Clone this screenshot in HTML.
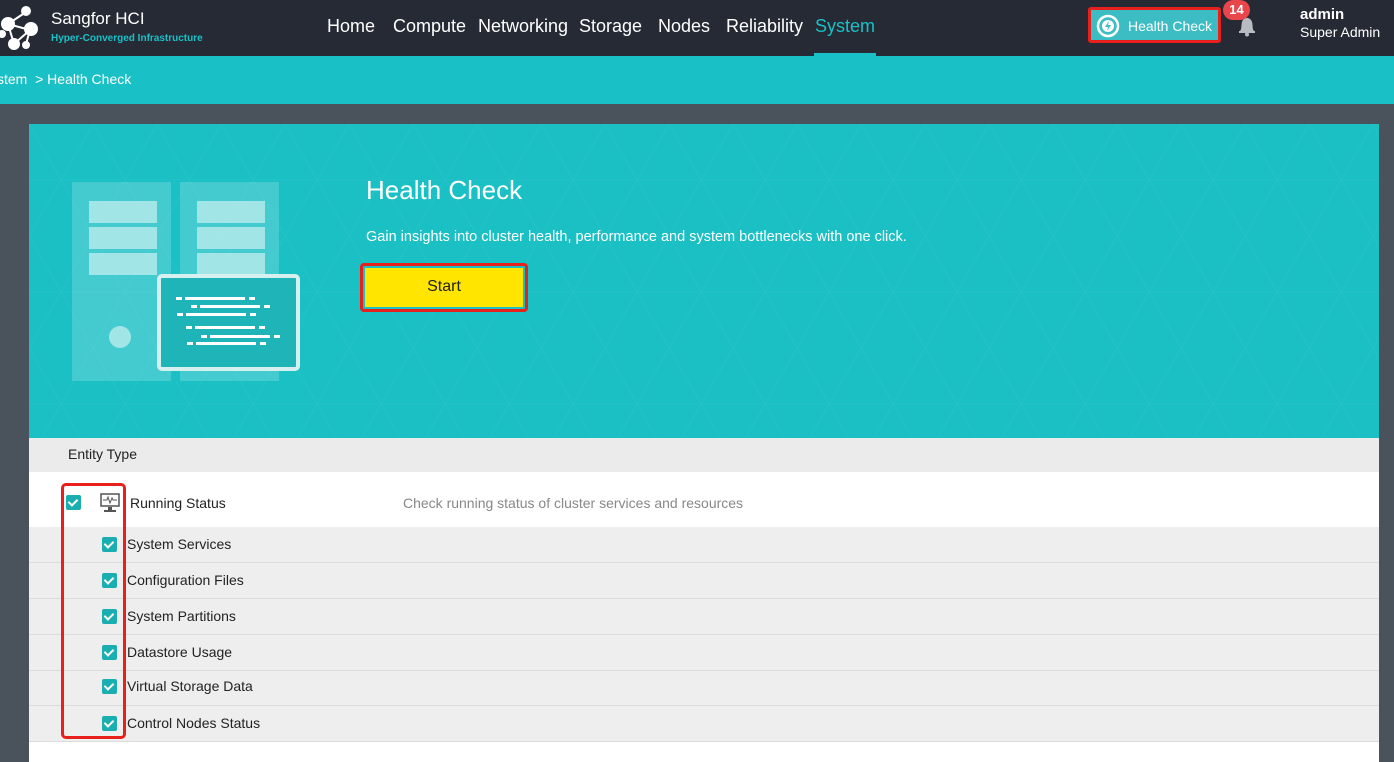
<!DOCTYPE html>
<html><head><meta charset="utf-8"><style>
*{margin:0;padding:0;box-sizing:border-box}
body{width:1394px;height:762px;overflow:hidden;background:#4a525c;font-family:"Liberation Sans",sans-serif;position:relative}
.top{position:absolute;left:0;top:0;width:1394px;height:56px;background:#252a35}
.crumb{position:absolute;left:0;top:56px;width:1394px;height:48px;background:#19c1c6;color:#fff;font-size:14px;line-height:46px}
.nav span{position:absolute;top:16px;font-size:18px;color:#fff}
.panel{position:absolute;left:29px;top:124px;width:1350px;height:638px;background:#fff}
.banner{position:absolute;left:0;top:0;width:1350px;height:314px;background:#1bc0c5}
.row{position:absolute;left:0;width:1350px;font-size:14px;color:#222}
.sub{height:36px;background:#eeeeee;border-bottom:1px solid #dcdcdc}
.cb{position:absolute;width:15px;height:15px;background:#1aaeb0;border-radius:2px}
.cb:after{content:"";position:absolute;left:4px;top:2px;width:4px;height:7px;border:solid #fff;border-width:0 2px 2px 0;transform:rotate(45deg)}
.sub .cb{left:73px;top:10px}
.sub span{position:absolute;left:98px;top:9px}
</style></head><body>
<div class="top">
 <svg style="position:absolute;left:0;top:4px" width="42" height="48"><g fill="#fff" stroke="#fff" stroke-width="2"><line x1="8" y1="20" x2="26" y2="8"/><line x1="8" y1="20" x2="30" y2="26"/><line x1="8" y1="20" x2="14" y2="40"/><line x1="30" y1="26" x2="14" y2="40"/><line x1="30" y1="26" x2="26" y2="40"/><circle cx="26" cy="7" r="4"/><circle cx="8" cy="20" r="6"/><circle cx="31" cy="25" r="6"/><circle cx="14" cy="40" r="5"/><circle cx="26" cy="41" r="3"/><circle cx="2" cy="30" r="3"/></g></svg>
 <div style="position:absolute;left:51px;top:9px;color:#fff;font-size:17px">Sangfor HCI</div>
 <div style="position:absolute;left:51px;top:33px;color:#19c1c6;font-size:10px;font-weight:bold">Hyper-Converged Infrastructure</div>
 <div class="nav"><span style="left:327px">Home</span><span style="left:393px">Compute</span><span style="left:478px">Networking</span><span style="left:579px">Storage</span><span style="left:658px">Nodes</span><span style="left:726px">Reliability</span><span style="left:815px;color:#19c1c6">System</span></div>
 <div style="position:absolute;left:814px;top:53px;width:62px;height:3px;background:#19c1c6"></div>
 <div style="position:absolute;left:1088px;top:7px;width:133px;height:36px;border:3px solid #e8201c;border-radius:3px;background:#3bbdc3">
  <svg style="position:absolute;left:5px;top:4px" width="24" height="24"><circle cx="12" cy="12" r="10" fill="none" stroke="#fff" stroke-width="2.5"/><circle cx="12" cy="12" r="6" fill="#fff"/><path d="M13 7 L9 13 H12 L11 17 L15 11 H12 Z" fill="#3bbdc3"/></svg>
  <span style="position:absolute;left:37px;top:8px;color:#fff;font-size:14px">Health Check</span>
 </div>
 <svg style="position:absolute;left:1237px;top:15px" width="20" height="22"><path d="M3 16 C5 14 4 10 5 7 C6 4 8 3 10 3 C12 3 14 4 15 7 C16 10 15 14 17 16 Z" fill="#b8bcc2"/><rect x="2" y="16" width="16" height="2" fill="#b8bcc2"/><circle cx="10" cy="19.5" r="2" fill="#b8bcc2"/></svg>
 <div style="position:absolute;left:1223px;top:0;width:27px;height:20px;border-radius:10px;background:#e8464a;color:#fff;font-size:13px;font-weight:bold;text-align:center;line-height:20px">14</div>
 <div style="position:absolute;left:1300px;top:6px;color:#fff;font-size:15px;font-weight:bold">admin</div>
 <div style="position:absolute;left:1300px;top:24px;color:#fff;font-size:14px">Super Admin</div>
</div>
<div class="crumb"><span style="margin-left:-3px">stem &nbsp;&gt; Health Check</span></div>
<div class="panel">
 <div class="banner">
  <svg width="1350" height="314" style="position:absolute;left:0;top:0"><defs><pattern id="p" width="64" height="112" patternUnits="userSpaceOnUse"><path d="M0 0 L32 56 L64 0 M0 112 L32 56 L64 112 M0 56 H64" stroke="#fff" stroke-opacity="0.035" fill="none"/></pattern></defs><rect width="1350" height="314" fill="url(#p)"/>
  <g fill="#fff"><rect x="43" y="58" width="99" height="199" fill-opacity="0.18"/><rect x="151" y="58" width="99" height="199" fill-opacity="0.18"/>
  <g fill-opacity="0.5"><rect x="60" y="77" width="68" height="22"/><rect x="60" y="103" width="68" height="22"/><rect x="60" y="129" width="68" height="22"/><rect x="168" y="77" width="68" height="22"/><rect x="168" y="103" width="68" height="22"/><rect x="168" y="129" width="68" height="22"/><circle cx="91" cy="213" r="11"/></g></g>
  <rect x="130" y="152" width="139" height="93" rx="3" fill="#1fb4b8" stroke="#d6efef" stroke-width="4"/>
  <g fill="#fff"><rect x="147" y="173" width="6" height="3"/><rect x="156" y="173" width="60" height="3"/><rect x="220" y="173" width="6" height="3"/><rect x="162" y="181" width="6" height="3"/><rect x="171" y="181" width="60" height="3"/><rect x="235" y="181" width="6" height="3"/><rect x="148" y="189" width="6" height="3"/><rect x="157" y="189" width="60" height="3"/><rect x="221" y="189" width="6" height="3"/><rect x="157" y="202" width="6" height="3"/><rect x="166" y="202" width="60" height="3"/><rect x="230" y="202" width="6" height="3"/><rect x="172" y="211" width="6" height="3"/><rect x="181" y="211" width="60" height="3"/><rect x="245" y="211" width="6" height="3"/><rect x="158" y="218" width="6" height="3"/><rect x="167" y="218" width="60" height="3"/><rect x="231" y="218" width="6" height="3"/></g></svg>
  <div style="position:absolute;left:337px;top:51px;color:#fff;font-size:26px;font-weight:300">Health Check</div>
  <div style="position:absolute;left:337px;top:105px;color:#fff;font-size:14.5px">Gain insights into cluster health, performance and system bottlenecks with one click.</div>
  <div style="position:absolute;left:331px;top:139px;width:168px;height:49px;border:3px solid #e8201c;border-radius:4px;padding:2px"><div style="width:100%;height:100%;background:#ffe500;color:#222;font-size:16px;text-align:center;line-height:37px">Start</div></div>
 </div>
 <div class="row" style="top:314px;height:34px;background:#ebebeb"><span style="position:absolute;left:39px;top:8px">Entity Type</span></div>
 <div class="row" style="top:348px;height:55px;background:#fff">
  <div class="cb" style="left:37px;top:23px"></div>
  <svg style="position:absolute;left:71px;top:21px" width="20" height="20"><rect x="1" y="1" width="18" height="12" fill="none" stroke="#555" stroke-width="1.5"/><path d="M3 7 H7 L8 4 L10 10 L12 5 L13 7 H17" stroke="#555" fill="none"/><rect x="8" y="14" width="4" height="3" fill="#555"/><rect x="4" y="17" width="12" height="2" fill="#555"/></svg>
  <span style="position:absolute;left:101px;top:23px">Running Status</span>
  <span style="position:absolute;left:374px;top:23px;color:#888">Check running status of cluster services and resources</span>
 </div>
 <div class="row sub" style="top:403px"><div class="cb"></div><span>System Services</span></div>
 <div class="row sub" style="top:439px"><div class="cb"></div><span>Configuration Files</span></div>
 <div class="row sub" style="top:475px"><div class="cb"></div><span>System Partitions</span></div>
 <div class="row sub" style="top:511px"><div class="cb"></div><span>Datastore Usage</span></div>
 <div class="row sub" style="top:547px;height:35px"><div class="cb" style="top:8px"></div><span style="top:7px">Virtual Storage Data</span></div>
 <div class="row sub" style="top:582px"><div class="cb"></div><span>Control Nodes Status</span></div>
 <div style="position:absolute;left:32px;top:359px;width:65px;height:256px;border:3px solid #e8201c;border-radius:5px"></div>
</div>
</body></html>
